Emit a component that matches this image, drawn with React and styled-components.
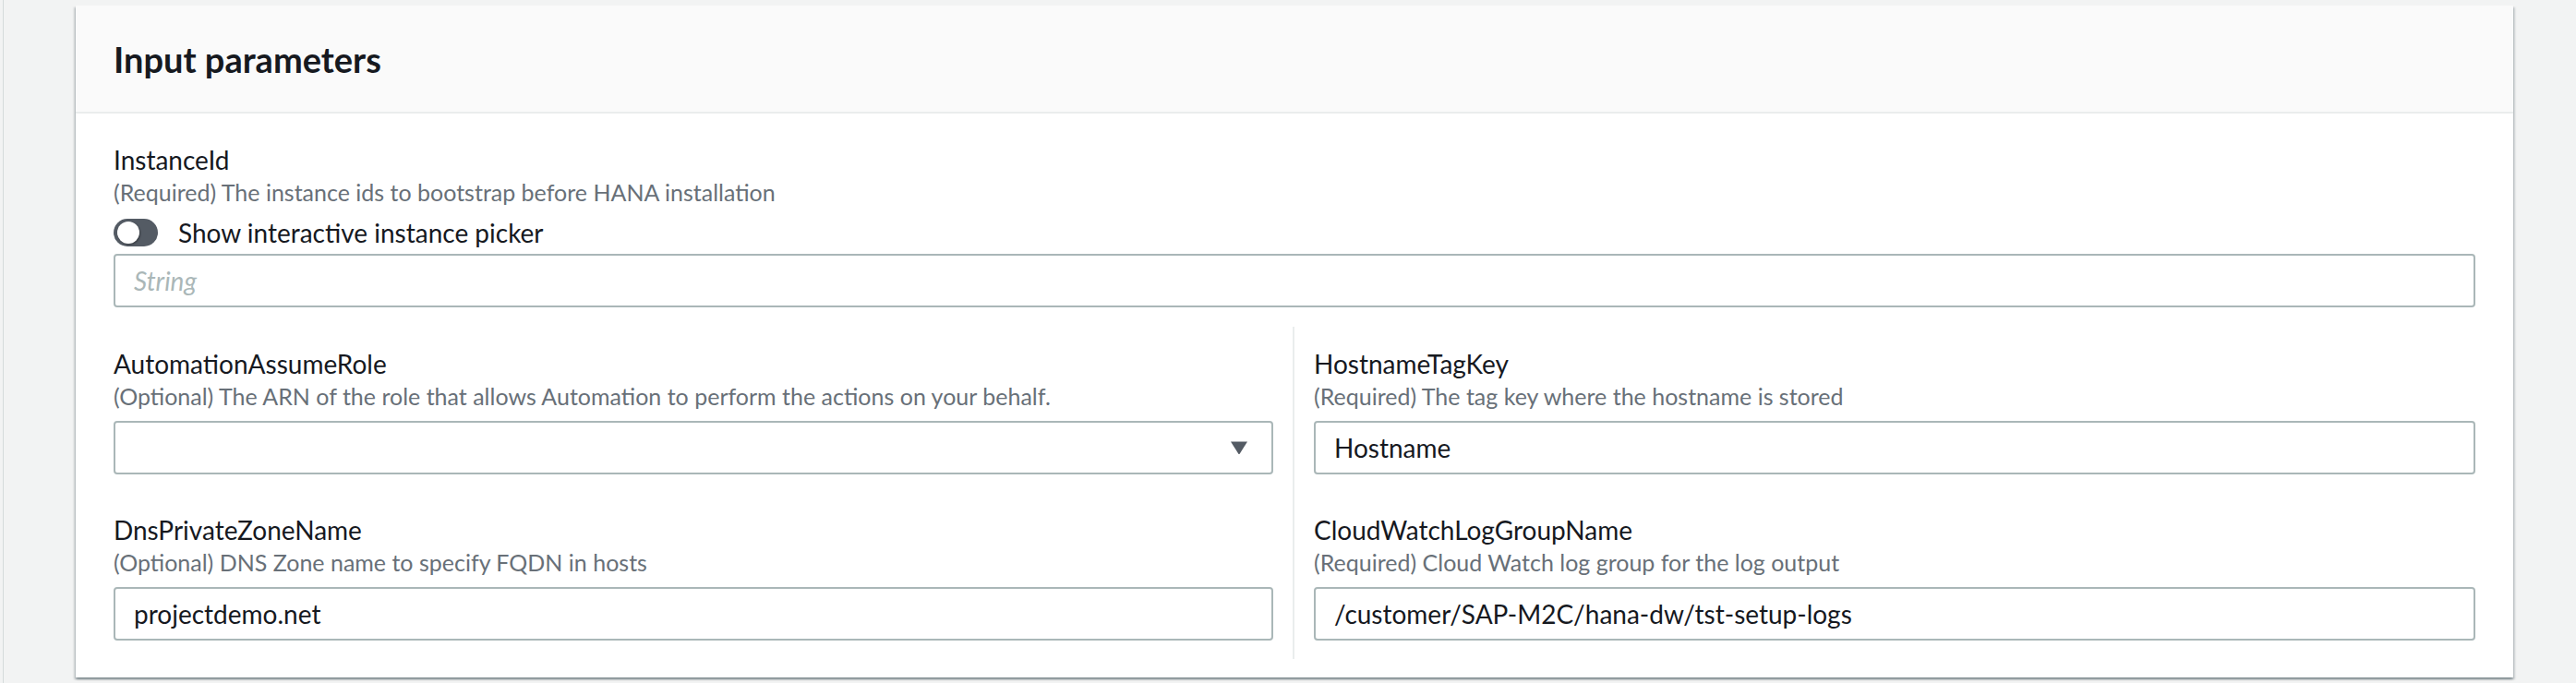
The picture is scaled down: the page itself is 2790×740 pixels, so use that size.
import React from "react";
import styled, { createGlobalStyle } from "styled-components";

const GlobalStyle = createGlobalStyle`
  body {
    margin: 0;
    background: #f2f3f3;
    font-family: Lato, "Open Sans", sans-serif;
    color: #16191f;
  }
`;

const Page = styled.div`
  box-sizing: border-box;
  min-height: 740px;
  margin-left: 3px;
  border-left: 1px solid #d5dbdb;
  padding: 6px 68px 7px 78px;
`;

const Card = styled.section`
  background: #fff;
  box-shadow: 0 2px 2px 0 rgba(0, 28, 36, 0.3), 2px 2px 2px 0 rgba(0, 28, 36, 0.15),
    -2px 2px 2px 0 rgba(0, 28, 36, 0.15);
`;

const Header = styled.div`
  background: #fafafa;
  border-bottom: 2px solid #eaeded;
  padding: 34px 41px 33px;
`;

const Title = styled.h2`
  margin: 0;
  font-size: 38px;
  line-height: 48px;
  font-weight: 700;
`;

const Body = styled.div`
  padding: 30px 41px 20px;
`;

const Label = styled.div`
  font-size: 28px;
  line-height: 40px;
`;

const Description = styled.div`
  font-size: 25px;
  line-height: 31px;
  color: #687078;
`;

const ToggleRow = styled.label`
  display: flex;
  align-items: center;
  gap: 22px;
  margin: 12px 0 7px;
  height: 32px;
  font-size: 28px;
  line-height: 32px;
`;

const Track = styled.span`
  position: relative;
  width: 48px;
  height: 30px;
  border-radius: 15px;
  background: #545b64;
  flex: none;
`;

const Knob = styled.span`
  position: absolute;
  left: 4px;
  top: 3px;
  width: 24px;
  height: 24px;
  border-radius: 50%;
  background: #fff;
  box-shadow: 1px 1px 2px rgba(0, 0, 0, 0.35);
`;

const Field = styled.div`
  box-sizing: border-box;
  display: flex;
  align-items: center;
  height: 58px;
  border: 2px solid #aab7b8;
  border-radius: 4px;
  padding: 0 25px 0 20px;
  font-size: 28px;
  color: ${(p) => (p.$placeholder ? "#aab7b8" : "#16191f")};
  font-style: ${(p) => (p.$placeholder ? "italic" : "normal")};
  justify-content: ${(p) => (p.$select ? "flex-end" : "flex-start")};
`;

const Columns = styled.div`
  display: grid;
  grid-template-columns: 1fr 1fr;
  margin-top: 21px;
`;

const Column = styled.div`
  display: flex;
  flex-direction: column;
  gap: 40px;
  padding: 20px ${(p) => (p.$left ? "21px" : "0")} 20px ${(p) => (p.$left ? "0" : "21px")};
  border-right: ${(p) => (p.$left ? "2px solid #eaeded" : "none")};
`;

const Group = styled.div`
  display: flex;
  flex-direction: column;
`;

const ControlSlot = styled.div`
  margin-top: 11px;
`;

const Caret = () => (
  <svg width="20" height="16" viewBox="0 0 20 16">
    <path d="M1 1.5 h18 L10.8 14.5 q-0.8 1.2 -1.6 0 Z" fill="#545b64" />
  </svg>
);

function Parameter({ label, description, children }) {
  return (
    <Group>
      <Label>{label}</Label>
      <Description>{description}</Description>
      <ControlSlot>{children}</ControlSlot>
    </Group>
  );
}

export default function App() {
  return (
    <>
      <GlobalStyle />
      <Page>
        <Card>
          <Header>
            <Title>Input parameters</Title>
          </Header>
          <Body>
            <Label>InstanceId</Label>
            <Description>(Required) The instance ids to bootstrap before HANA installation</Description>
            <ToggleRow>
              <Track>
                <Knob />
              </Track>
              Show interactive instance picker
            </ToggleRow>
            <Field $placeholder>String</Field>
            <Columns>
              <Column $left>
                <Parameter
                  label="AutomationAssumeRole"
                  description="(Optional) The ARN of the role that allows Automation to perform the actions on your behalf."
                >
                  <Field $select>
                    <Caret />
                  </Field>
                </Parameter>
                <Parameter
                  label="DnsPrivateZoneName"
                  description="(Optional) DNS Zone name to specify FQDN in hosts"
                >
                  <Field>projectdemo.net</Field>
                </Parameter>
              </Column>
              <Column>
                <Parameter
                  label="HostnameTagKey"
                  description="(Required) The tag key where the hostname is stored"
                >
                  <Field>Hostname</Field>
                </Parameter>
                <Parameter
                  label="CloudWatchLogGroupName"
                  description="(Required) Cloud Watch log group for the log output"
                >
                  <Field>/customer/SAP-M2C/hana-dw/tst-setup-logs</Field>
                </Parameter>
              </Column>
            </Columns>
          </Body>
        </Card>
      </Page>
    </>
  );
}
